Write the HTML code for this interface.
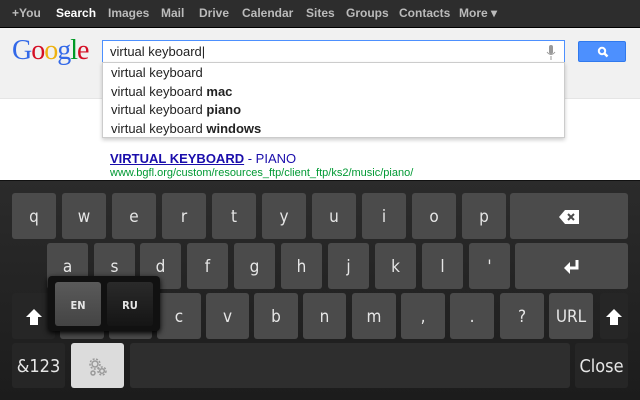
<!DOCTYPE html>
<html><head><style>
*{margin:0;padding:0;box-sizing:border-box}
body{width:640px;height:400px;overflow:hidden;background:#fff;font-family:"Liberation Sans",Arial,sans-serif;position:relative}
.top{position:absolute;left:0;top:0;width:640px;height:28px;background:#2d2d2d;border-bottom:1px solid #000}
.top span{position:absolute;top:6px;font-size:12px;font-weight:bold;color:#bbb}
.hdr{position:absolute;left:0;top:28px;width:640px;height:71px;background:#f1f1f1;border-bottom:1px solid #e5e5e5}
.logo{position:absolute;left:12px;top:35px;font-family:"Liberation Serif",serif;font-size:28px;letter-spacing:-1px}
.box{position:absolute;left:102px;top:40px;width:463px;height:23px;background:#fff;border:1px solid #4d90fe;font-size:13px;padding:3px 7px;color:#222}
.btn{position:absolute;left:578px;top:41px;width:48px;height:21px;background:#4d90fe;border:1px solid #3079ed;border-radius:2px}
.dd{position:absolute;left:102px;top:62px;width:463px;height:76px;background:#fff;border:1px solid #ccc;box-shadow:0 2px 4px rgba(0,0,0,.2);font-size:13px;color:#222}
.dd div{height:18.7px;padding:2px 8px}
.res{position:absolute;left:110px;top:151px;font-size:13px}
.kb{position:absolute;left:0;top:180px;width:640px;height:220px;background:linear-gradient(#2b2b2b,#1c1c1c);border-top:1px solid #111}
.k{position:absolute;background:#4b4b4b;border-radius:3px;color:#e6e6e6;font-family:"DejaVu Sans Condensed","DejaVu Sans",sans-serif;font-size:17px;display:flex;align-items:center;justify-content:center;padding-top:2px}
.d{background:#262626}
</style></head><body>
<div class="top">
<span style="left:12px">+You</span><span style="left:56px;color:#fff">Search</span><span style="left:108px">Images</span><span style="left:161px">Mail</span><span style="left:199px">Drive</span><span style="left:242px">Calendar</span><span style="left:306px">Sites</span><span style="left:346px">Groups</span><span style="left:399px">Contacts</span><span style="left:459px">More ▾</span>
</div>
<div class="hdr"></div>
<div class="logo"><span style="color:#3369e8">G</span><span style="color:#d50f25">o</span><span style="color:#eeb211">o</span><span style="color:#3369e8">g</span><span style="color:#009925">l</span><span style="color:#d50f25">e</span></div>
<div class="box">virtual keyboard|<svg style="position:absolute;right:8px;top:4px" width="10" height="15"><rect x="3" y="0" width="4" height="9" rx="2" fill="#999"/><path d="M1 7q4 5 8 0M5 11v4" stroke="#999" fill="none"/></svg></div>
<div class="btn"><svg style="position:absolute;left:18px;top:4px" width="12" height="12"><circle cx="5" cy="5" r="3.2" stroke="#fff" stroke-width="2" fill="none"/><path d="M7.5 7.5l3 3" stroke="#fff" stroke-width="2.5"/></svg></div>
<div class="dd"><div>virtual keyboard</div><div>virtual keyboard <b>mac</b></div><div>virtual keyboard <b>piano</b></div><div>virtual keyboard <b>windows</b></div></div>
<div class="res"><a style="color:#1a0dab;font-weight:bold;text-decoration:underline">VIRTUAL KEYBOARD</a><span style="color:#1a0dab"> - PIANO</span><div style="color:#093;font-size:11px;margin-top:1px">www.bgfl.org/custom/resources_ftp/client_ftp/ks2/music/piano/</div></div>
<div class="kb"></div>
<div class="k" style="left:12px;top:193px;width:44px;height:46px">q</div>
<div class="k" style="left:62px;top:193px;width:44px;height:46px">w</div>
<div class="k" style="left:112px;top:193px;width:44px;height:46px">e</div>
<div class="k" style="left:162px;top:193px;width:44px;height:46px">r</div>
<div class="k" style="left:212px;top:193px;width:44px;height:46px">t</div>
<div class="k" style="left:262px;top:193px;width:44px;height:46px">y</div>
<div class="k" style="left:312px;top:193px;width:44px;height:46px">u</div>
<div class="k" style="left:362px;top:193px;width:44px;height:46px">i</div>
<div class="k" style="left:412px;top:193px;width:44px;height:46px">o</div>
<div class="k" style="left:462px;top:193px;width:44px;height:46px">p</div>
<div class="k" style="left:510px;top:193px;width:118px;height:46px"><svg width="20" height="14"><path d="M0 7l6-7h14v14H6z" fill="#fff"/><path d="M9 4l6 6M15 4l-6 6" stroke="#4b4b4b" stroke-width="2"/></svg></div>
<div class="k" style="left:47px;top:243px;width:41px;height:46px">a</div>
<div class="k" style="left:94px;top:243px;width:41px;height:46px">s</div>
<div class="k" style="left:140px;top:243px;width:41px;height:46px">d</div>
<div class="k" style="left:187px;top:243px;width:41px;height:46px">f</div>
<div class="k" style="left:234px;top:243px;width:41px;height:46px">g</div>
<div class="k" style="left:281px;top:243px;width:41px;height:46px">h</div>
<div class="k" style="left:328px;top:243px;width:41px;height:46px">j</div>
<div class="k" style="left:375px;top:243px;width:41px;height:46px">k</div>
<div class="k" style="left:422px;top:243px;width:41px;height:46px">l</div>
<div class="k" style="left:469px;top:243px;width:41px;height:46px">'</div>
<div class="k" style="left:515px;top:243px;width:113px;height:46px"><svg width="16" height="14"><path d="M13 0v8H5" stroke="#fff" stroke-width="3" fill="none"/><path d="M0 8l6-6v12z" fill="#fff"/></svg></div>
<div class="k d" style="left:12px;top:293px;width:43px;height:46px"><svg width="16" height="16"><path d="M8 0l8 8h-4v8H4V8H0z" fill="#fff"/></svg></div>
<div class="k" style="left:60px;top:293px;width:44px;height:46px">z</div>
<div class="k" style="left:109px;top:293px;width:43px;height:46px">x</div>
<div class="k" style="left:157px;top:293px;width:44px;height:46px">c</div>
<div class="k" style="left:206px;top:293px;width:43px;height:46px">v</div>
<div class="k" style="left:254px;top:293px;width:44px;height:46px">b</div>
<div class="k" style="left:303px;top:293px;width:43px;height:46px">n</div>
<div class="k" style="left:352px;top:293px;width:44px;height:46px">m</div>
<div class="k" style="left:401px;top:293px;width:44px;height:46px">,</div>
<div class="k" style="left:450px;top:293px;width:44px;height:46px">.</div>
<div class="k" style="left:500px;top:293px;width:44px;height:46px">?</div>
<div class="k" style="left:549px;top:293px;width:44px;height:46px">URL</div>
<div class="k d" style="left:600px;top:293px;width:28px;height:46px"><svg width="16" height="16"><path d="M8 0l8 8h-4v8H4V8H0z" fill="#fff"/></svg></div>
<div style="position:absolute;left:48px;top:276px;width:112px;height:55px;background:#111;border-radius:4px;box-shadow:0 2px 6px #000"></div>
<div class="k" style="left:55px;top:282px;width:46px;height:44px;background:linear-gradient(#5a5a5a,#444);font-size:11px;font-weight:bold">EN</div>
<div class="k" style="left:107px;top:282px;width:46px;height:44px;background:linear-gradient(#2a2a2a,#151515);font-size:11px;font-weight:bold">RU</div>
<div class="k d" style="left:12px;top:343px;width:53px;height:45px;font-size:18px">&amp;123</div>
<div class="k" style="left:71px;top:343px;width:53px;height:45px;background:#dcdcdc"><svg width="20" height="18"><g fill="none" stroke="#999" stroke-width="1.5"><circle cx="7" cy="6" r="3"/><circle cx="7" cy="6" r="5" stroke-dasharray="2 1.5"/><circle cx="14" cy="13" r="2.3"/><circle cx="14" cy="13" r="4" stroke-dasharray="2 1.5"/><circle cx="5" cy="15" r="2"/></g></svg></div>
<div class="k" style="left:130px;top:343px;width:440px;height:45px;background:#2e2e2e"></div>
<div class="k d" style="left:575px;top:343px;width:53px;height:45px;font-size:18px">Close</div>
</body></html>
